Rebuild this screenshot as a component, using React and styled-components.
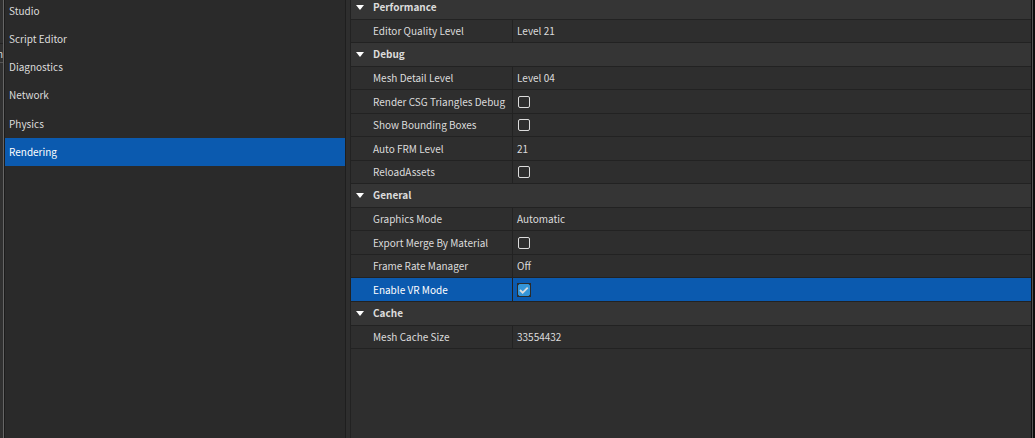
import React, { useState } from 'react'
import styled, { createGlobalStyle } from 'styled-components'

const GlobalStyle = createGlobalStyle`
  * {
    box-sizing: border-box;
  }
  html,
  body,
  #root {
    height: 100%;
    margin: 0;
  }
  body {
    overflow: hidden;
    background: #2a2a2a;
    color: #dcdcdc;
    font: 10px/16px 'Noto Sans CJK SC', 'Noto Sans', sans-serif;
  }
  button {
    border: 0;
    background: none;
    color: inherit;
    font: inherit;
    text-align: left;
  }
`

const Window = styled.div`
  display: flex;
  height: 100%;
`

const Backdrop = styled.aside`
  width: 4px;
  height: 100%;
  padding-top: 43px;
  overflow: hidden;
  background: #303030;
  border-right: 1px solid #666;
  flex: none;
`

const BackdropTab = styled.div`
  display: flex;
  justify-content: flex-end;
  height: 20px;
  padding-top: 2px;
  border-top: 1px solid #222;
  border-bottom: 1px solid #555;
`

const RightEdge = styled.div`
  width: 4px;
  flex: none;
  background: #555;
  border-left: 1px solid #111;
  border-right: 2px solid #0e0e0e;
`

const Body = styled.main`
  display: flex;
  flex: 1;
  min-width: 0;
  border-left: 1px solid #1c1c1c;
`

const Sidebar = styled.nav`
  flex: 1;
  min-width: 0;
  overflow: hidden;
`

const PageList = styled.ul`
  list-style: none;
  margin: -3px 0 0;
  padding: 0;
`

const PageItem = styled.li`
  height: 28px;
  &:nth-child(4n) {
    height: 29px;
  }
`

const PageButton = styled.button`
  display: block;
  width: 100%;
  height: 100%;
  padding: 0 4px 1px;
  &[aria-current='page'] {
    background: #0b5aaf;
    color: #fff;
  }
`

const Splitter = styled.div`
  width: 6px;
  flex: none;
  background: #2e2e2e;
  border-left: 1px solid #1e1e1e;
  border-right: 1px solid #222;
`

const Properties = styled.section`
  flex: 2;
  min-width: 0;
  overflow: hidden;
  background: #2e2e2e;
`

const Table = styled.table`
  width: 100%;
  margin-top: -4px;
  border-collapse: separate;
  border-spacing: 0;
  table-layout: fixed;
`

const NameCol = styled.col`
  width: 162px;
`

const Row = styled.tr`
  height: 23px;
  background: ${({ $selected }) => ($selected ? '#0b5aaf' : '#2e2e2e')};
  color: ${({ $selected }) => ($selected ? '#fff' : 'inherit')};
  &:nth-child(odd) {
    height: 24px;
  }
`

const CategoryRow = styled(Row)`
  background: #353535;
`

const CategoryCell = styled.th`
  padding: 0 0 1px;
  border-bottom: 1px solid #222;
`

const CategoryButton = styled.button`
  display: flex;
  align-items: center;
  gap: 9px;
  width: 100%;
  padding: 0 5px;
  font-weight: 700;
`

const Arrow = styled.svg`
  width: 8px;
  height: 5px;
  fill: #fff;
  transform: ${({ $open }) => ($open ? 'none' : 'rotate(-90deg)')};
`

const NameCell = styled.th`
  padding: 0 0 0 22px;
  border-right: 1px solid #222;
  border-bottom: 1px solid #222;
  font-weight: 400;
  text-align: left;
  white-space: nowrap;
`

const ValueCell = styled.td`
  padding: 0 4px;
  border-bottom: 1px solid #222;
`

const CheckFrame = styled.span`
  display: block;
  width: 14px;
  height: 14px;
  padding: 1px;
  background: ${({ $on }) => ($on ? '#2b2b2b' : 'none')};
`

const Checkbox = styled.input`
  display: block;
  appearance: none;
  width: 12px;
  height: 12px;
  margin: 0;
  border: 1px solid #dcdcdc;
  border-radius: 2px;
  &:checked {
    border-color: #3595d8;
    background: #3595d8
      url("data:image/svg+xml,%3Csvg xmlns='http://www.w3.org/2000/svg' viewBox='0 0 10 10'%3E%3Cpath d='M1 5l2.7 2.7 5-5' fill='none' stroke='%23ddd' stroke-width='1.8'/%3E%3C/svg%3E");
  }
`

const pages = [
  'Studio',
  'Script Editor',
  'Diagnostics',
  'Network',
  'Physics',
  'Rendering',
]

const categories = [
  {
    name: 'Performance',
    items: [{ name: 'Editor Quality Level', val: 'Level 21' }],
  },
  {
    name: 'Debug',
    items: [
      { name: 'Mesh Detail Level', val: 'Level 04' },
      { name: 'Render CSG Triangles Debug', val: false },
      { name: 'Show Bounding Boxes', val: false },
      { name: 'Auto FRM Level', val: '21' },
      { name: 'ReloadAssets', val: false },
    ],
  },
  {
    name: 'General',
    items: [
      { name: 'Graphics Mode', val: 'Automatic' },
      { name: 'Export Merge By Material', val: false },
      { name: 'Frame Rate Manager', val: 'Off' },
      { name: 'Enable VR Mode', val: true },
    ],
  },
  {
    name: 'Cache',
    items: [{ name: 'Mesh Cache Size', val: '33554432' }],
  },
]

function Property({ item, selected, onSelect }) {
  const [val, setVal] = useState(item.val)
  const id = item.name.toLowerCase().split(' ').join('-')
  const isBool = typeof val === 'boolean'

  return (
    <Row $selected={selected} onClick={onSelect}>
      <NameCell scope="row">
        {isBool ? <label htmlFor={id}>{item.name}</label> : item.name}
      </NameCell>
      <ValueCell>
        {isBool ? (
          <CheckFrame $on={val}>
            <Checkbox
              id={id}
              type="checkbox"
              checked={val}
              onChange={(ev) => setVal(ev.target.checked)}
            />
          </CheckFrame>
        ) : (
          val
        )}
      </ValueCell>
    </Row>
  )
}

function Category({ category, selected, setSelected }) {
  const [open, setOpen] = useState(true)

  return (
    <tbody>
      <CategoryRow>
        <CategoryCell colSpan={2}>
          <CategoryButton aria-expanded={open} onClick={() => setOpen(!open)}>
            <Arrow $open={open} viewBox="0 0 8 5" aria-hidden="true">
              <path d="M0 0h8L4 5z" />
            </Arrow>
            {category.name}
          </CategoryButton>
        </CategoryCell>
      </CategoryRow>
      {open
        ? category.items.map((e) => (
            <Property
              key={e.name}
              item={e}
              selected={selected === e.name}
              onSelect={() => setSelected(e.name)}
            />
          ))
        : null}
    </tbody>
  )
}

export default function App() {
  const [page, setPage] = useState('Rendering')
  const [selected, setSelected] = useState('Enable VR Mode')

  return (
    <Window>
      <GlobalStyle />
      <Backdrop>
        <BackdropTab>n</BackdropTab>
      </Backdrop>
      <Body>
        <Sidebar>
          <PageList>
            {pages.map((e) => (
              <PageItem key={e}>
                <PageButton
                  aria-current={page === e ? 'page' : undefined}
                  onClick={() => setPage(e)}
                >
                  {e}
                </PageButton>
              </PageItem>
            ))}
          </PageList>
        </Sidebar>
        <Splitter />
        <Properties>
          <Table>
            <colgroup>
              <NameCol />
              <col />
            </colgroup>
            {categories.map((e) => (
              <Category
                key={e.name}
                category={e}
                selected={selected}
                setSelected={setSelected}
              />
            ))}
          </Table>
        </Properties>
      </Body>
      <RightEdge />
    </Window>
  )
}
